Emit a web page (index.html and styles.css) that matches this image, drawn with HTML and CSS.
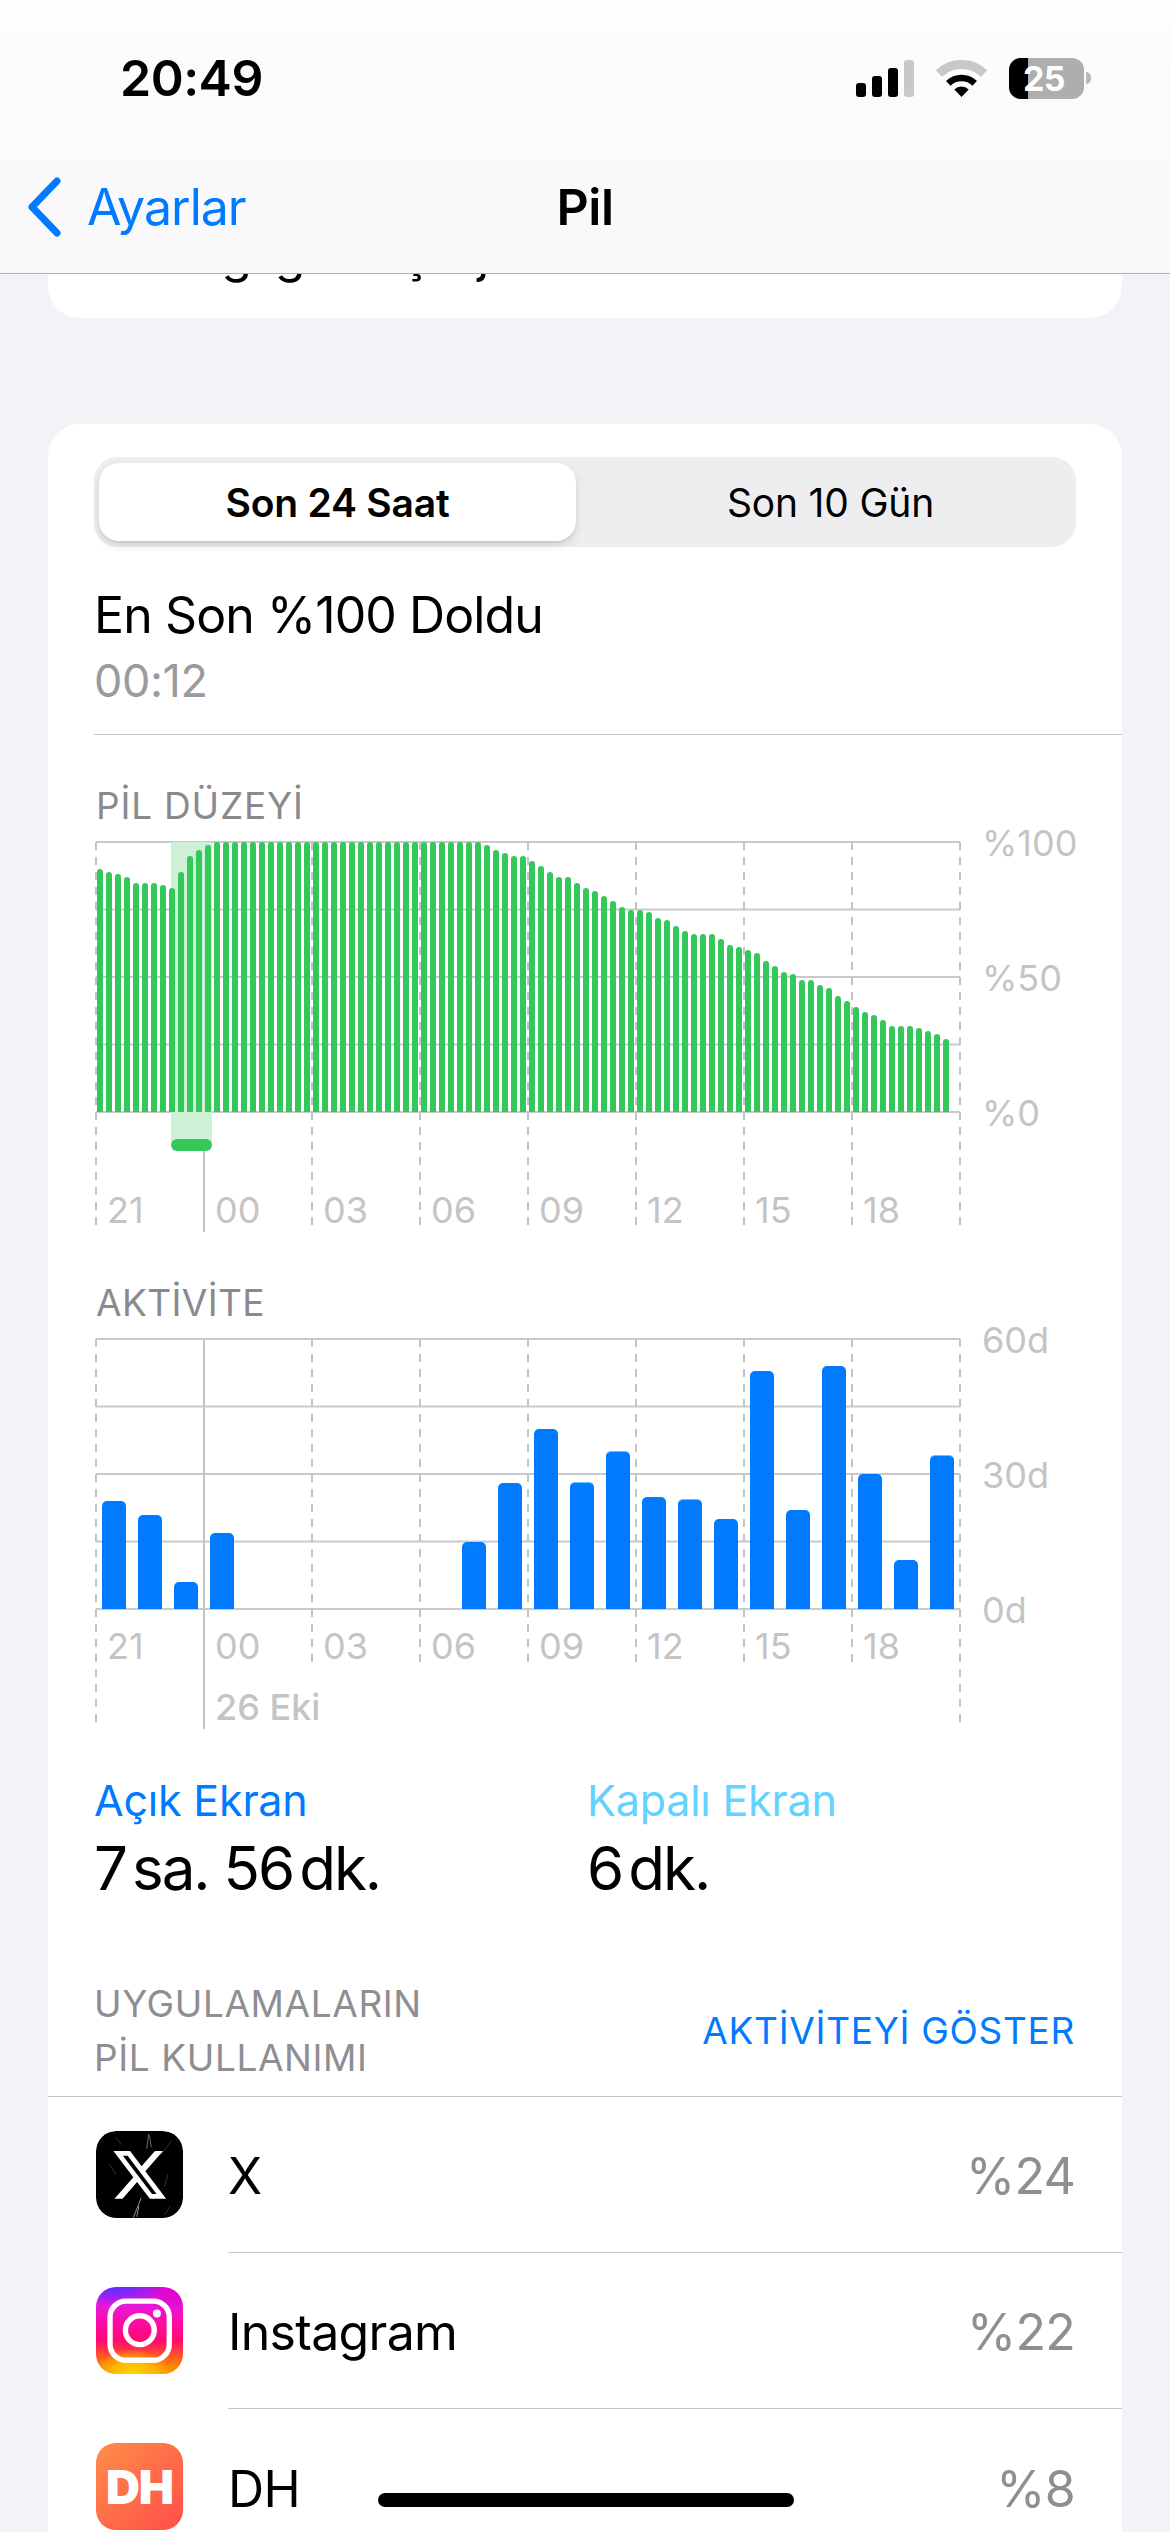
FILE: index.html
```html
<!DOCTYPE html>
<html lang="tr">
<head>
<meta charset="utf-8">
<title>Pil</title>
<link rel="stylesheet" href="styles.css">
</head>
<body>
<div class="screen">
  <header class="header">
    <div class="status">
      <span class="time">20:49</span>
      <div class="status-icons">
        <div class="signal"><i class="s1"></i><i class="s2"></i><i class="s3"></i><i class="s4"></i></div>
        <svg class="wifi" width="51" height="37" viewBox="0 0 51 37">
          <path d="M2.9 13.6A32.5 32.5 0 0 1 48.1 13.6" fill="none" stroke="#c8c8c8" stroke-width="9"/>
          <path d="M12.3 23.3A19 19 0 0 1 38.7 23.3" fill="none" stroke="#000" stroke-width="6.5"/>
          <path d="M25.5 37L18.3 29.6A10.2 10.2 0 0 1 32.7 29.6Z" fill="#000"/>
        </svg>
        <div class="battery"><div class="battery-body"><span class="battery-level"></span><span class="battery-text">25</span></div><span class="battery-cap"></span></div>
      </div>
    </div>
    <nav class="nav">
      <div class="back">
        <svg width="36" height="62" viewBox="0 0 36 62"><path d="M31 5L6 31L31 57" fill="none" stroke="#007aff" stroke-width="7" stroke-linecap="round" stroke-linejoin="round"/></svg>
        <span>Ayarlar</span>
      </div>
      <div class="nav-title">Pil</div>
      <div></div>
    </nav>
  </header>

  <section class="card card-top">
    <div class="hidden-row">Pil Sağlığı ve Şarj Etme</div>
  </section>

  <section class="card card-main">
    <div class="segmented">
      <div class="seg seg-on">Son 24 Saat</div>
      <div class="seg seg-off">Son 10 Gün</div>
    </div>
    <div class="last-title">En Son %100 Doldu</div>
    <div class="last-time">00:12</div>
    <div class="divider"></div>

    <div class="chart-title title-battery">PİL DÜZEYİ</div>
    <div class="chart">
      <svg class="grid" width="880" height="391" viewBox="0 0 880 391">
        <g class="hl"><path d="M1 1H865M1 68.5H865M1 136H865M1 203.5H865M1 271H865"/></g>
        <g class="dash"><path d="M1 1V385M109 1V385M217 1V385M325 1V385M433 1V385M541 1V385M649 1V385M757 1V385M865 1V385"/></g>
      </svg>
      <div class="band"></div>
      <div class="plot plot-green">
<i style="height:243px"></i><i style="height:240px"></i><i style="height:238px"></i><i style="height:235px"></i><i style="height:229px"></i><i style="height:229px"></i><i style="height:229px"></i><i style="height:227px"></i><i style="height:224px"></i><i style="height:240px"></i><i style="height:256px"></i><i style="height:262px"></i><i style="height:267px"></i><i style="height:270px"></i><i style="height:270px"></i><i style="height:270px"></i><i style="height:270px"></i><i style="height:270px"></i><i style="height:270px"></i><i style="height:270px"></i><i style="height:270px"></i><i style="height:270px"></i><i style="height:270px"></i><i style="height:270px"></i><i style="height:270px"></i><i style="height:270px"></i><i style="height:270px"></i><i style="height:270px"></i><i style="height:270px"></i><i style="height:270px"></i><i style="height:270px"></i><i style="height:270px"></i><i style="height:270px"></i><i style="height:270px"></i><i style="height:270px"></i><i style="height:270px"></i><i style="height:270px"></i><i style="height:270px"></i><i style="height:270px"></i><i style="height:270px"></i><i style="height:270px"></i><i style="height:270px"></i><i style="height:270px"></i><i style="height:267px"></i><i style="height:262px"></i><i style="height:259px"></i><i style="height:256px"></i><i style="height:256px"></i><i style="height:251px"></i><i style="height:246px"></i><i style="height:240px"></i><i style="height:235px"></i><i style="height:235px"></i><i style="height:229px"></i><i style="height:224px"></i><i style="height:221px"></i><i style="height:216px"></i><i style="height:211px"></i><i style="height:205px"></i><i style="height:202px"></i><i style="height:202px"></i><i style="height:200px"></i><i style="height:194px"></i><i style="height:192px"></i><i style="height:186px"></i><i style="height:181px"></i><i style="height:178px"></i><i style="height:178px"></i><i style="height:178px"></i><i style="height:173px"></i><i style="height:167px"></i><i style="height:165px"></i><i style="height:162px"></i><i style="height:159px"></i><i style="height:151px"></i><i style="height:146px"></i><i style="height:140px"></i><i style="height:138px"></i><i style="height:132px"></i><i style="height:132px"></i><i style="height:127px"></i><i style="height:124px"></i><i style="height:116px"></i><i style="height:111px"></i><i style="height:105px"></i><i style="height:100px"></i><i style="height:97px"></i><i style="height:92px"></i><i style="height:86px"></i><i style="height:86px"></i><i style="height:86px"></i><i style="height:84px"></i><i style="height:81px"></i><i style="height:78px"></i><i style="height:73px"></i>
      </div>
      <div class="charge-pill"></div>
      <div class="xlabels xlabels-battery"><span>21</span><span>00</span><span>03</span><span>06</span><span>09</span><span>12</span><span>15</span><span>18</span></div>
      <div class="ylabels"><span>%100</span><span>%50</span><span>%0</span></div>
    </div>

    <div class="chart-title title-activity">AKTİVİTE</div>
    <div class="chart">
      <svg class="grid" width="880" height="391" viewBox="0 0 880 391">
        <g class="hl"><path d="M1 1H865M1 68.5H865M1 136H865M1 203.5H865M1 271H865"/></g>
        <g class="dash"><path d="M1 1V385M865 1V385M217 1V325M325 1V325M433 1V325M541 1V325M649 1V325M757 1V325"/></g>
      </svg>
      <div class="plot plot-blue">
<i style="height:108px"></i><i style="height:94px"></i><i style="height:27px"></i><i style="height:76px"></i><i></i><i></i><i></i><i></i><i></i><i></i><i style="height:67px"></i><i style="height:126px"></i><i style="height:180px"></i><i class="off" style="height:127px"></i><i class="off" style="height:158px"></i><i style="height:112px"></i><i class="off" style="height:110px"></i><i style="height:90px"></i><i style="height:238px"></i><i style="height:99px"></i><i style="height:243px"></i><i style="height:135px"></i><i style="height:49px"></i><i class="off" style="height:154px"></i>
      </div>
      <div class="xlabels xlabels-activity"><span>21</span><span>00</span><span>03</span><span>06</span><span>09</span><span>12</span><span>15</span><span>18</span><span class="date">26 Eki</span></div>
      <div class="ylabels"><span>60d</span><span>30d</span><span>0d</span></div>
    </div>

    <div class="stats">
      <div>
        <div class="stat-label on">Açık Ekran</div>
        <div class="stat-value">7<span class="sp"></span>sa. 56<span class="sp"></span>dk.</div>
      </div>
      <div>
        <div class="stat-label off-screen">Kapalı Ekran</div>
        <div class="stat-value">6<span class="sp"></span>dk.</div>
      </div>
    </div>

    <div class="usage-head">
      <div class="usage-title">UYGULAMALARIN<br>PİL KULLANIMI</div>
      <div class="usage-link">AKTİVİTEYİ GÖSTER</div>
    </div>
    <div class="divider-full"></div>

    <div class="row">
      <svg class="app-icon" viewBox="0 0 260 260">
        <rect width="260" height="260" rx="60" fill="#000"/>
        <g fill="none" stroke="#fff" stroke-linecap="round">
          <path d="M157 10L152 52M160 14L165 48" stroke-width="3" opacity=".4"/>
          <path d="M135 200L112 258M128 225L122 255" stroke-width="3" opacity=".55"/>
          <path d="M215 130L205 165M222 225L205 250M60 20L75 40M40 100L60 130M225 30L195 70" stroke-width="2" opacity=".3"/>
        </g>
        <path transform="translate(42.9 43.6) scale(7.3)" fill="#fff" d="M18.244 2.25h3.308l-7.227 8.26 8.502 11.24H16.17l-5.214-6.817L4.99 21.75H1.68l7.73-8.835L1.254 2.25H8.08l4.713 6.231zm-1.161 17.52h1.833L7.084 4.126H5.117z"/>
      </svg>
      <div class="row-body"><span>X</span><span class="pct">%24</span></div>
    </div>
    <div class="row">
      <div class="app-icon insta">
        <svg viewBox="0 0 260 260" width="87" height="87">
          <rect x="42" y="42" width="177" height="177" rx="48" fill="none" stroke="#fff" stroke-width="16"/>
          <circle cx="131" cy="129" r="43" fill="none" stroke="#fff" stroke-width="16"/>
          <circle cx="182" cy="79" r="12" fill="#fff"/>
        </svg>
      </div>
      <div class="row-body"><span>Instagram</span><span class="pct">%22</span></div>
    </div>
    <div class="row">
      <div class="app-icon dh">DH</div>
      <div class="row-body last"><span>DH</span><span class="pct">%8</span></div>
    </div>
  </section>

  <div class="home-indicator"></div>
</div>
</body>
</html>
```

FILE: styles.css
```css
* { box-sizing: border-box; }
html, body { margin: 0; padding: 0; }
body {
  width: 1170px;
  height: 2532px;
  overflow: hidden;
  background: #f2f2f7;
  font-family: Inter, "Noto Sans", sans-serif;
  color: #000;
}
.screen { position: relative; width: 1170px; height: 2532px; overflow: hidden; }

/* header */
.header {
  position: absolute;
  top: 0; left: 0; right: 0;
  height: 274px;
  z-index: 5;
  background: linear-gradient(180deg, #fdfdff 0%, #fafafc 60%, #f8f8fa 100%);
  border-bottom: 1px solid #b2b2b2;
}
.status {
  height: 156px;
  display: flex;
  justify-content: space-between;
  align-items: center;
  padding: 0 79px 0 120px;
}
.time { font-size: 50px; font-weight: 600; line-height: 60px; letter-spacing: -.5px; }
.status-icons { display: flex; align-items: center; gap: 22px; }
.signal { display: flex; align-items: flex-end; gap: 6px; height: 37px; }
.signal i { display: block; width: 10px; border-radius: 3px; background: #000; }
.signal .s1 { height: 14px; }
.signal .s2 { height: 21px; }
.signal .s3 { height: 29px; }
.signal .s4 { height: 37px; background: #c8c8c8; }
.battery { display: flex; align-items: center; gap: 2px; }
.battery-body {
  position: relative;
  width: 75px; height: 41px;
  border-radius: 12px;
  background: #aeaeae;
  overflow: hidden;
  display: flex; align-items: center; justify-content: center;
}
.battery-level { position: absolute; left: 0; top: 0; bottom: 0; width: 19px; background: #000; }
.battery-text { position: relative; color: #fff; font-size: 34px; font-weight: 700; line-height: 41px; margin-left: -5px; letter-spacing: -.5px; }
.battery-cap { width: 5px; height: 12px; background: #b8b8b8; border-radius: 0 6px 6px 0; }

.nav {
  height: 102px;
  display: grid;
  grid-template-columns: 1fr auto 1fr;
  align-items: center;
}
.back { display: flex; align-items: center; gap: 25px; padding-left: 26px; color: #007aff; font-size: 50px; line-height: 60px; letter-spacing: -1px; }
.nav-title { font-size: 50px; font-weight: 600; line-height: 60px; letter-spacing: -.4px; }

/* cards */
.card { background: #fff; margin: 0 48px; border-radius: 32px; }
.card-top { height: 318px; padding: 224px 0 0 46px; }
.hidden-row { font-size: 50px; line-height: 60px; white-space: nowrap; letter-spacing: -.5px; }
.card-main { margin-top: 106px; padding-top: 33px; height: 2200px; }

.segmented {
  margin: 0 46px;
  height: 90px;
  padding: 6px 5px;
  border-radius: 24px;
  background: #eeeef0;
  display: grid;
  grid-template-columns: 477px 1fr;
}
.seg { display: flex; align-items: center; justify-content: center; font-size: 39px; letter-spacing: -.2px; }
.seg-off { padding-left: 14px; }
.seg-on {
  background: #fff;
  border-radius: 20px;
  font-weight: 600;
  box-shadow: 0 4px 10px rgba(0,0,0,.12), 0 2px 2px rgba(0,0,0,.06);
}
.last-title { margin: 38px 46px 0; font-size: 50px; line-height: 60px; letter-spacing: -.9px; }
.last-time { margin: 11px 46px 0; font-size: 45px; line-height: 50px; color: #9a9a9f; letter-spacing: -.4px; }
.divider { margin: 28px 0 0 46px; height: 1px; background: #c6c6c8; }

.chart-title { margin-left: 48px; font-size: 37px; line-height: 44px; color: #8a8a8e; }
.title-battery { margin-top: 49px; letter-spacing: .8px; }
.title-activity { margin-top: 49px; letter-spacing: .4px; }
.chart { position: relative; margin: 13px 0 0 47px; width: 1000px; height: 391px; }
.grid { position: absolute; left: 0; top: 0; }
.hl path { stroke: #c9c9cc; stroke-width: 2; fill: none; }
.dash path { stroke: #c4c4c6; stroke-width: 2; stroke-dasharray: 8 7; fill: none; }
.band { position: absolute; left: 76px; top: 1px; width: 41px; height: 300px; background: #cdf0d6; }
.chart::before {
  content: "";
  position: absolute;
  left: 108px; top: 0;
  width: 2px; height: 391px;
  background: #c4c4c6;
}
.plot { position: relative; height: 271px; display: flex; align-items: flex-end; }
.plot-green { padding-left: 2px; gap: 3px; }
.plot-green i { display: block; width: 6px; background: #34c759; border-radius: 3px 3px 0 0; }
.plot-blue { padding-left: 7px; gap: 12px; }
.plot-blue i { display: block; width: 24px; background: #007aff; border-radius: 5px 5px 0 0; }
.plot-blue i.off { border-top: 1px solid #5ac8fa; }
.charge-pill { position: absolute; left: 76px; top: 298px; width: 41px; height: 12px; border-radius: 6px; background: #34c759; }
.xlabels {
  position: relative;
  display: grid;
  grid-template-columns: repeat(8, 108px);
  padding-left: 12px;
  font-size: 36px;
  line-height: 44px;
  color: #c4c4c6;
}
.xlabels-battery { margin-top: 76px; }
.xlabels-activity { margin-top: 15px; row-gap: 17px; }
.date { grid-column: 2 / span 2; grid-row: 2; font-weight: 500; }
.ylabels {
  position: absolute;
  left: 887px; top: -20px;
  height: 314px;
  display: flex;
  flex-direction: column;
  justify-content: space-between;
  font-size: 36px;
  line-height: 44px;
  color: #c4c4c6;
}

.stats { margin: 46px 0 0 46px; display: grid; grid-template-columns: 493px 1fr; }
.stat-label { font-size: 43px; line-height: 50px; letter-spacing: -.2px; }
.stat-label.on { color: #007aff; }
.stat-label.off-screen { color: #64d2ff; }
.stat-value { margin-top: 8px; font-size: 60px; line-height: 70px; letter-spacing: -2px; }
.sp { display: inline-block; width: 6px; }

.usage-head { margin: 74px 47px 0 46px; display: flex; justify-content: space-between; align-items: center; }
.usage-title { font-size: 37px; line-height: 54px; color: #8e8e93; letter-spacing: .6px; }
.usage-link { font-size: 37px; line-height: 44px; color: #007aff; letter-spacing: .7px; }
.divider-full { margin-top: 11px; height: 1px; background: #c6c6c8; }

.row { display: flex; align-items: center; height: 156px; padding-left: 48px; }
.app-icon { display: block; flex: none; width: 87px; height: 87px; border-radius: 20px; overflow: hidden; margin-top: -1px; }
.row-body {
  margin-left: 45px;
  flex: 1;
  height: 156px;
  display: flex;
  align-items: center;
  justify-content: space-between;
  padding: 3px 47px 0 0;
  border-bottom: 1px solid #c6c6c8;
  font-size: 50px;
  letter-spacing: -.7px;
}
.row-body.last { border-bottom: 0; }
.pct { color: #8e8e93; }
.insta {
  background:
    radial-gradient(45% 28% at 42% 100%, #ffd600 0%, #ffb800 50%, rgba(255,170,0,0) 100%),
    radial-gradient(55% 22% at 22% 0%, #5f2bff 0%, rgba(95,43,255,0) 100%),
    radial-gradient(45% 30% at 88% 4%, #e800c8 0%, rgba(232,0,200,0) 100%),
    linear-gradient(180deg, #b020f0 0%, #e818d8 22%, #ff0a9a 45%, #ff0a70 62%, #ff6a10 84%, #ff9d00 100%);
}
.dh {
  display: flex;
  align-items: center;
  justify-content: center;
  background: linear-gradient(135deg, #ff8d4a 0%, #ff6a48 55%, #ff4f4c 100%);
  color: #fff;
  font-size: 47px;
  font-weight: 900;
  letter-spacing: -1px;
}
.home-indicator {
  position: absolute;
  left: 378px; top: 2493px;
  width: 416px; height: 14px;
  border-radius: 7px;
  background: #000;
  z-index: 6;
}
```
